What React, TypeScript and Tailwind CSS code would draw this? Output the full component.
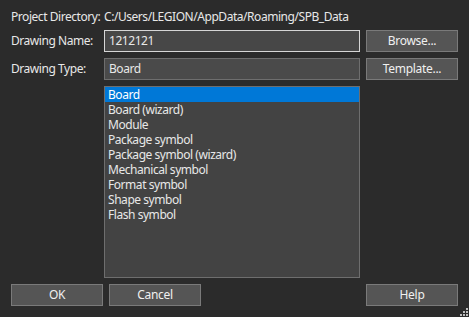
const ITEMS = [
  "Board",
  "Board (wizard)",
  "Module",
  "Package symbol",
  "Package symbol (wizard)",
  "Mechanical symbol",
  "Format symbol",
  "Shape symbol",
  "Flash symbol",
];

function DlgButton({ label }: { label: string }) {
  return (
    <button
      type="button"
      className="w-[92px] h-[22px] flex items-center justify-center bg-[#555555] border border-[#7a7a7a] text-[#f0f0f0] text-[12px] leading-none tracking-[-0.3px]"
    >
      {label}
    </button>
  );
}

function SizeGrip() {
  const dots = [
    [9, 1],
    [6, 4],
    [9, 4],
    [3, 7],
    [6, 7],
    [9, 7],
  ];
  return (
    <svg className="absolute right-0 bottom-0" width="12" height="10" viewBox="0 0 12 10">
      {dots.map(([x, y]) => (
        <rect key={`${x}-${y}`} x={x} y={y} width="2" height="2" fill="#bdbdbd" />
      ))}
    </svg>
  );
}

export default function App() {
  return (
    <div
      className="relative w-[469px] h-[317px] bg-[#2b2b2b] text-[#e8e8e8] text-[12px] tracking-[-0.45px] px-[11px] pt-[9px] flex flex-col whitespace-nowrap"
      style={{ fontFamily: '"Segoe UI", "Noto Sans", "Open Sans", sans-serif' }}
    >
      {/* project dir */}
      <div className="flex items-center h-[16px]">
        <span className="w-[93px] shrink-0">Project Directory:</span>
        <span>C:/Users/LEGION/AppData/Roaming/SPB_Data</span>
      </div>

      {/* drawing name */}
      <div className="flex items-center h-[22px] mt-[5px]">
        <span className="w-[93px] shrink-0">Drawing Name:</span>
        <div className="w-[256px] h-[22px] border border-[#d6d6d6] bg-[#474747] flex items-center px-[4px]">
          1212121
        </div>
        <div className="ml-[6px]">
          <DlgButton label="Browse..." />
        </div>
      </div>

      {/* drawing type */}
      <div className="flex items-center h-[22px] mt-[6px]">
        <span className="w-[93px] shrink-0">Drawing Type:</span>
        <div className="w-[256px] h-[22px] border border-[#6e6e6e] bg-[#4a4a4a] flex items-center px-[4px]">
          Board
        </div>
        <div className="ml-[6px]">
          <DlgButton label="Template..." />
        </div>
      </div>

      {/* type list */}
      <div className="ml-[93px] mt-[6px] w-[256px] h-[192px] border border-[#6e6e6e] bg-[#434343] flex flex-col">
        {ITEMS.map((item, i) => (
          <div
            key={item}
            className={`h-[15px] flex items-center leading-none px-[3px] ${i === 0 ? "bg-[#0078d7] text-white" : ""}`}
          >
            {item}
          </div>
        ))}
      </div>

      {/* bottom buttons */}
      <div className="flex items-center mt-[6px]">
        <DlgButton label="OK" />
        <div className="ml-[6px]">
          <DlgButton label="Cancel" />
        </div>
        <div className="ml-auto">
          <DlgButton label="Help" />
        </div>
      </div>

      <SizeGrip />
    </div>
  );
}
